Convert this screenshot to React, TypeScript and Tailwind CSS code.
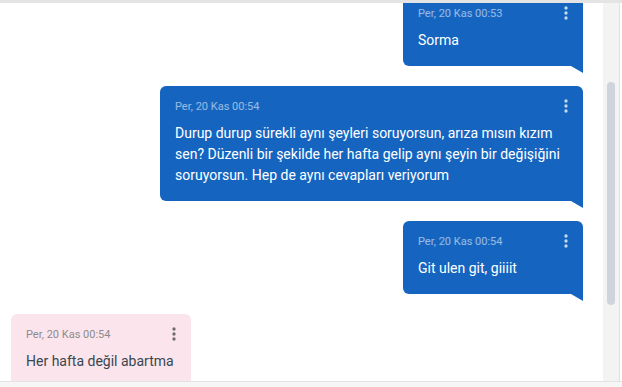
import { FC } from 'react'

type Msg = {
  id: number
  time: string
  text: string
  mine: boolean
}

const messages: Msg[] = [
  { id: 1, time: 'Per, 20 Kas 00:53', text: 'Sorma', mine: true },
  {
    id: 2,
    time: 'Per, 20 Kas 00:54',
    text: 'Durup durup sürekli aynı şeyleri soruyorsun, arıza mısın kızım sen? Düzenli bir şekilde her hafta gelip aynı şeyin bir değişiğini soruyorsun. Hep de aynı cevapları veriyorum',
    mine: true,
  },
  { id: 3, time: 'Per, 20 Kas 00:54', text: 'Git ulen git, giiiit', mine: true },
  { id: 4, time: 'Per, 20 Kas 00:54', text: 'Her hafta değil abartma', mine: false },
]

const MoreVert: FC<{ className?: string }> = ({ className }) => (
  <svg viewBox="0 0 24 24" width="20" height="20" className={className} fill="currentColor">
    <circle cx="12" cy="6" r="2" />
    <circle cx="12" cy="12" r="2" />
    <circle cx="12" cy="18" r="2" />
  </svg>
)

const Bubble: FC<{ m: Msg }> = ({ m }) => (
  <div className={m.mine ? 'flex justify-end' : 'flex justify-start'}>
    <div
      className={
        m.mine
          ? 'relative min-w-[180px] max-w-[423px] rounded-md rounded-br-none bg-[#1565c0] pl-[15px] pr-[15px] pt-[13px] pb-[15px] text-white'
          : 'relative min-w-[180px] max-w-[423px] rounded-md rounded-bl-none bg-[#fce4ec] pl-[15px] pr-[15px] pt-[13px] pb-[15px] text-[#37474f]'
      }
    >
      <div className="flex h-4 items-center justify-between gap-3">
        <span className={m.mine ? 'text-[11px] leading-4 text-white/55' : 'text-[11px] leading-4 text-[#8c8c8c]'}>
          {m.time}
        </span>
        <MoreVert className={m.mine ? '-mr-[8px] -mt-[3px] shrink-0 text-white/75' : '-mr-[8px] -mt-[3px] shrink-0 text-[#6e6e6e]'} />
      </div>
      <p className="mt-2 text-[14px] leading-[21px]">{m.text}</p>
      {m.mine ? (
        <svg width="12" height="7" viewBox="0 0 12 7" className="absolute right-0 top-full">
          <polygon points="0,0 12,0 12,7" fill="#1565c0" />
        </svg>
      ) : (
        <svg width="12" height="7" viewBox="0 0 12 7" className="absolute left-0 top-full">
          <polygon points="0,0 12,0 0,7" fill="#fce4ec" />
        </svg>
      )}
    </div>
  </div>
)

const App: FC = () => (
  <div className="flex h-[387px] w-[622px] flex-col overflow-hidden bg-white font-['Roboto',sans-serif]">
    <div className="h-[3px] bg-[#e4e4e4]" />
    <div className="flex min-h-0 flex-1">
      <div className="min-w-0 flex-1 overflow-hidden">
        <div className="-mt-[10px] flex flex-col gap-5 pl-[11px] pr-[20px]">
          {messages.map((m) => (
            <Bubble key={m.id} m={m} />
          ))}
        </div>
      </div>
      <div className="w-[16px] bg-[#f3f3f3]">
        <div className="mx-auto mt-[79px] h-[223px] w-2 rounded-full bg-[#cfd4dc]" />
      </div>
      <div className="w-[3px] border-l border-[#e2e2e2] bg-white" />
    </div>
    <div className="h-[6px] border-t border-[#e2e2e2] bg-[#f6f6f6]" />
  </div>
)

export default App
